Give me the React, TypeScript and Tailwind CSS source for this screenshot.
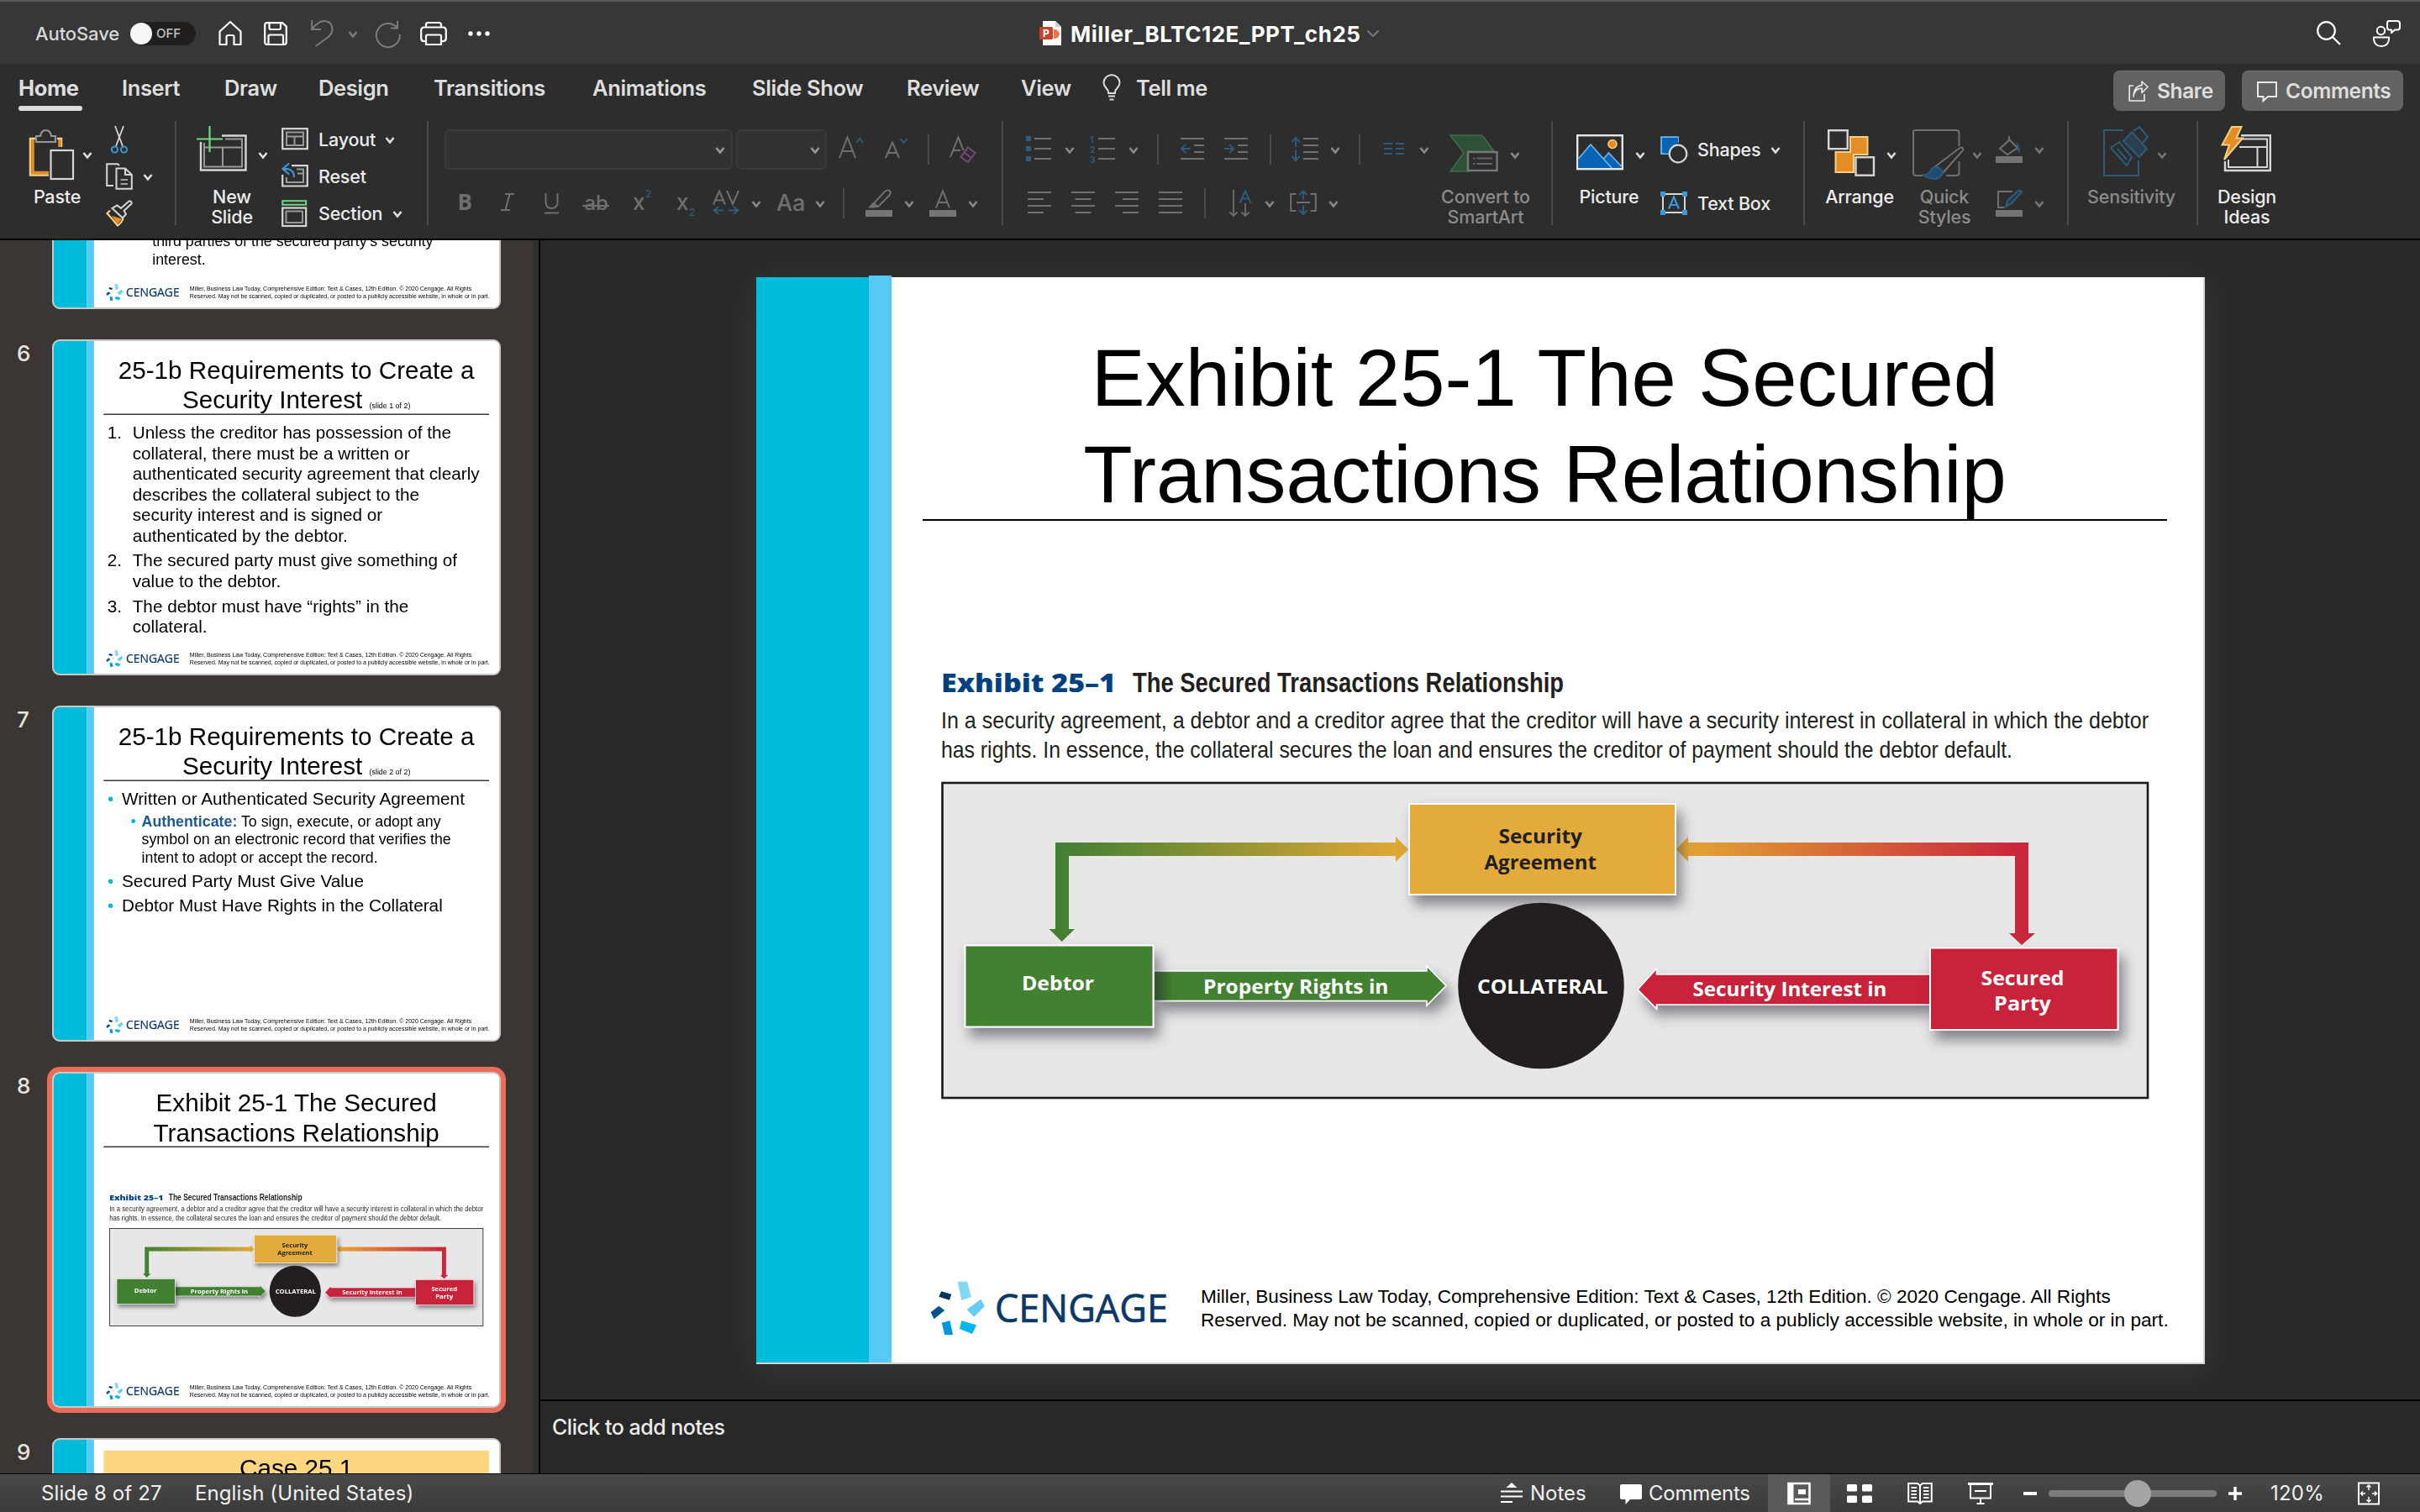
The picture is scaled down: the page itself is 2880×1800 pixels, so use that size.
import React from "react";
import clsx from "clsx";

const GREY = "#6f6f6f";
const BLUE = "#2f5b7a";
const LIGHT = "#d6d6d6";

type IcoProps = {
  w: number;
  h?: number;
  className?: string;
  children?: React.ReactNode;
};

const Ico = ({ w, h = 32, className, children }: IcoProps) => (
  <svg
    width={w}
    height={h}
    viewBox={`0 0 ${w} ${h}`}
    fill="none"
    strokeWidth={2}
    className={clsx("shrink-0 overflow-visible", className)}
  >
    {children}
  </svg>
);

const Chev = ({ className, c = "#8a8a8a" }: { className?: string; c?: string }) => (
  <Ico w={12} className={className}>
    <path d="M1.5 14 L6 19.5 L10.5 14" stroke={c} strokeWidth={2.6} />
  </Ico>
);

const Divider = () => <div className="h-[124px] w-[2px] shrink-0 bg-[#4b4b4b]" />;

const Sep = ({ className }: { className?: string }) => (
  <div className={clsx("h-9 w-[2px] shrink-0 bg-[#4b4b4b]", className)} />
);

const Glyph = ({
  x,
  y,
  size,
  c = GREY,
  children,
  ...rest
}: React.SVGProps<SVGTextElement> & { size: number; c?: string }) => (
  <text x={x} y={y} fontSize={size} fill={c} fontFamily="Inter, sans-serif" {...rest}>
    {children}
  </text>
);

/* ---------- slide content ---------- */

const CengageLogo = () => (
  <svg width={284} height={68} viewBox="1107 1524 284 68" className="mt-1 ml-[46px] shrink-0">
    <path d="M1139.7 1525.7 L1151.2 1525.7 L1155.8 1544 L1144.3 1548 Z" fill="#84d7f7" />
    <path d="M1167.3 1546.7 L1171.8 1555 L1159.2 1567.7 L1150.6 1559 Z" fill="#63cdf3" />
    <path d="M1144.3 1572.3 L1162 1577.3 L1157 1588 L1142 1582 Z" fill="#00b6f1" />
    <path d="M1120.8 1574.7 L1130.5 1572.3 L1134 1589 L1124.2 1589 Z" fill="#0099dd" />
    <path d="M1117.3 1554.7 L1124.2 1560 L1111.6 1570.3 L1107.6 1562.3 Z" fill="#00558a" />
    <path d="M1120.2 1537.3 L1132.2 1540.7 L1130 1547.7 L1117.3 1543.7 Z" fill="#053560" />
    <text
      x={1184}
      y={1574}
      fontSize={45}
      fill="#0b3866"
      stroke="#0b3866"
      strokeWidth={0.7}
      fontFamily="'Open Sans', sans-serif"
      textLength={206}
      lengthAdjust="spacingAndGlyphs"
    >
      CENGAGE
    </text>
  </svg>
);

type SlideProps = {
  heading?: React.ReactNode;
  headingClass?: string;
  className?: string;
  children?: React.ReactNode;
};

const Slide = ({ heading, headingClass, className, children }: SlideProps) => (
  <div
    className={clsx(
      "flex h-[1294px] w-[1724px] shrink-0 bg-white font-['Liberation_Sans',Arial,sans-serif] text-black",
      className
    )}
  >
    <div className="w-[134px] shrink-0 bg-[#00bcdc]" />
    <div className="-mt-[2px] w-[27px] shrink-0 bg-[#56c9f5]" />
    <div className="flex flex-1 flex-col">
      <div
        className={clsx(
          "ml-[37px] w-[1481px] shrink-0 text-center text-[95.8px] whitespace-nowrap",
          headingClass
        )}
      >
        {heading}
      </div>
      <div className="h-[900px] shrink-0">{children}</div>
      <div className="flex">
        <CengageLogo />
        <p className="mt-[10.4px] ml-[38px] text-[22.6px] leading-7 whitespace-nowrap">
          Miller, Business Law Today, Comprehensive Edition: Text &amp; Cases, 12th Edition. © 2020 Cengage. All Rights
          <br />
          Reserved. May not be scanned, copied or duplicated, or posted to a publicly accessible website, in whole or in part.
        </p>
      </div>
    </div>
  </div>
);

const RULED = "h-[290px] border-b-2 border-black";
const RULED_THUMB = "h-[290px] border-b-4 border-[#111]";

type FitProps = {
  x: number;
  x2: number;
  y: number;
  size: number;
  fill?: string;
  weight?: number;
  font?: string;
  children: string;
};

// text squeezed or stretched to run exactly from x to x2
const Fit = ({ x, x2, y, size, fill = "#fff", weight = 700, font = "'Open Sans', sans-serif", children }: FitProps) => (
  <text
    x={x}
    y={y}
    fontSize={size}
    fill={fill}
    fontWeight={weight}
    fontFamily={font}
    textLength={x2 - x}
    lengthAdjust="spacingAndGlyphs"
  >
    {children}
  </text>
);

const ARIAL = "'Liberation Sans', Arial, sans-serif";

const ExhibitFigure = () => (
  <svg width={1484} height={540} viewBox="1098 780 1484 540" className="ml-[37px]">
    <defs>
      <linearGradient id="toGold" x1="1264" x2="1661" y1="0" y2="0" gradientUnits="userSpaceOnUse">
        <stop offset="0" stopColor="#438033" />
        <stop offset="1" stopColor="#dfa834" />
      </linearGradient>
      <linearGradient id="toRed" x1="2009" x2="2400" y1="0" y2="0" gradientUnits="userSpaceOnUse">
        <stop offset="0" stopColor="#e2a433" />
        <stop offset="1" stopColor="#c9273c" />
      </linearGradient>
      <linearGradient id="stem" x1="1373" x2="1396" y1="0" y2="0" gradientUnits="userSpaceOnUse">
        <stop offset="0" stopColor="#2c5a20" />
        <stop offset="1" stopColor="#438033" />
      </linearGradient>
      <filter id="drop" x="-20%" y="-60%" width="140%" height="240%">
        <feDropShadow dx="6" dy="11" stdDeviation="8" floodColor="#40424c" floodOpacity="0.6" />
      </filter>
    </defs>
    <Fit x={1120} x2={1328} y={824} size={30.5} weight={800} fill="#004280">Exhibit 25–1</Fit>
    <Fit x={1348} x2={1861} y={824} size={33} fill="#231f20" font={ARIAL}>The Secured Transactions Relationship</Fit>
    <Fit x={1120} x2={2557} y={867} size={28.5} weight={400} fill="#231f20" font={ARIAL}>
      In a security agreement, a debtor and a creditor agree that the creditor will have a security interest in collateral in which the debtor
    </Fit>
    <Fit x={1120} x2={2395} y={902} size={28.5} weight={400} fill="#231f20" font={ARIAL}>
      has rights. In essence, the collateral secures the loan and ensures the creditor of payment should the debtor default.
    </Fit>
    <rect x="1121.5" y="932" width="1434.5" height="375" fill="#e7e7e7" stroke="#1b191a" strokeWidth="2.6" />

    <path d="M1256 1003 H1661 V996 L1676 1011 L1661 1026 V1019 H1272 V1106 H1279 L1263.7 1121 L1248.5 1106 H1256 Z" fill="url(#toGold)" />
    <path d="M2414 1003 H2009 V996 L1995 1011 L2009 1026 V1019 H2398 V1111 H2391 L2406 1125 L2422 1111 H2414 Z" fill="url(#toRed)" />

    <path filter="url(#drop)" d="M1373 1156 H1698 V1150 L1721 1173.5 L1698 1197 V1191.5 H1373 Z" fill="url(#stem)" stroke="#fff" strokeWidth="1.6" />
    <path filter="url(#drop)" d="M2298 1160 H1971.5 V1153 L1949 1178 L1971.5 1201 V1196 H2298 Z" fill="#c9223a" stroke="#fff" strokeWidth="1.6" />
    <g filter="url(#drop)" stroke="#fff" strokeWidth="2">
      <rect x="1677" y="957" width="317" height="108" fill="#e2ab3b" />
    </g>
    <g filter="url(#drop)" stroke="#fff" strokeWidth="2">
      <rect x="1148.5" y="1125.5" width="224" height="97" fill="#438033" />
    </g>
    <g filter="url(#drop)" stroke="#fff" strokeWidth="2">
      <rect x="2297" y="1128.5" width="223.5" height="97.5" fill="#c9223a" />
    </g>
    <circle cx="1834" cy="1173.5" r="98.8" fill="#231f20" />

    <Fit x={1783.5} x2={1883} y={1003.5} size={24} fill="#231f20">Security</Fit>
    <Fit x={1766.5} x2={1900} y={1035} size={24} fill="#231f20">Agreement</Fit>
    <Fit x={1216} x2={1302} y={1179} size={24}>Debtor</Fit>
    <Fit x={1432} x2={1652.5} y={1182.5} size={24}>Property Rights in</Fit>
    <Fit x={1758} x2={1913.5} y={1182.5} size={24}>COLLATERAL</Fit>
    <Fit x={2014.5} x2={2245.5} y={1185.5} size={24}>Security Interest in</Fit>
    <Fit x={2357.5} x2={2456.5} y={1173} size={24}>Secured</Fit>
    <Fit x={2373} x2={2441} y={1203} size={24}>Party</Fit>
  </svg>
);

const ExhibitSlide = ({ className, rule }: { className?: string; rule: string }) => (
  <Slide
    className={className}
    headingClass={clsx(rule, "pt-[61.5px] leading-[115.5px]")}
    heading={
      <>
        Exhibit 25-1 The Secured
        <br />
        Transactions Relationship
      </>
    }
  >
    <div className="pt-[160px]">
      <ExhibitFigure />
    </div>
  </Slide>
);

const RequirementsHeading = ({ part }: { part: string }) => (
  <>
    25-1b Requirements to Create a
    <br />
    Security Interest <span className="text-[28.7px] leading-none">{part}</span>
  </>
);

const ListItem = ({ n, className, children }: { n: string; className?: string; children: React.ReactNode }) => (
  <li className={clsx("flex", className)}>
    <span className="w-[97px] shrink-0">{n}</span>
    <span>{children}</span>
  </li>
);

const Bullet = ({ className, children }: { className?: string; children: React.ReactNode }) => (
  <li className={clsx("flex", className)}>
    <span className="w-[55px] shrink-0 text-[#00b8d8]">•</span>
    <span>{children}</span>
  </li>
);

const slides = [
  {
    id: 5,
    body: (
      <Slide headingClass={RULED_THUMB}>
        <p className="pt-[705px] pl-[224px] text-[57.5px] leading-[70px] whitespace-nowrap">
          third parties of the secured party’s security
          <br />
          interest.
        </p>
      </Slide>
    ),
  },
  {
    id: 6,
    body: (
      <Slide
        headingClass={clsx(RULED_THUMB, "pt-[63px] leading-[112px]")}
        heading={<RequirementsHeading part="(slide 1 of 2)" />}
      >
        <ol className="pt-7 pl-[51px] text-[67px] leading-[79.5px] whitespace-nowrap">
          <ListItem n="1.">
            Unless the creditor has possession of the
            <br />
            collateral, there must be a written or
            <br />
            authenticated security agreement that clearly
            <br />
            describes the collateral subject to the
            <br />
            security interest and is signed or
            <br />
            authenticated by the debtor.
          </ListItem>
          <ListItem n="2." className="mt-[14px]">
            The secured party must give something of
            <br />
            value to the debtor.
          </ListItem>
          <ListItem n="3." className="mt-[17px]">
            The debtor must have “rights” in the
            <br />
            collateral.
          </ListItem>
        </ol>
      </Slide>
    ),
  },
  {
    id: 7,
    body: (
      <Slide
        headingClass={clsx(RULED_THUMB, "pt-[63px] leading-[112px]")}
        heading={<RequirementsHeading part="(slide 2 of 2)" />}
      >
        <ul className="pt-7 pl-[52px] text-[67px] leading-[79.5px] whitespace-nowrap">
          <Bullet>Written or Authenticated Security Agreement</Bullet>
          <li className="mt-[12px] flex pl-[89px] text-[57.5px] leading-[69.8px]">
            <span className="w-[42px] shrink-0 text-[#00b8d8]">•</span>
            <span>
              <b className="text-[#1d5a96]">Authenticate:</b> To sign, execute, or adopt any
              <br />
              symbol on an electronic record that verifies the
              <br />
              intent to adopt or accept the record.
            </span>
          </li>
          <Bullet className="mt-4">Secured Party Must Give Value</Bullet>
          <Bullet className="mt-[13px]">Debtor Must Have Rights in the Collateral</Bullet>
        </ul>
      </Slide>
    ),
  },
  { id: 8, body: <ExhibitSlide rule={RULED_THUMB} />, selected: true },
  {
    id: 9,
    body: <Slide headingClass="mt-12 h-[242px] bg-[#fcd680] pt-[10px] leading-[115.5px]" heading="Case 25.1" />,
  },
];

const ThumbnailPanel = () => (
  <aside className="w-[643px] shrink-0 overflow-hidden border-r-2 border-black bg-[#303030]">
    <div className="h-full w-[634px] overflow-hidden bg-[#3b3633]">
      <ul className="-mt-[318px]">
        {slides.map(({ id, body, selected }) => (
          <li key={id} className="flex h-[436px]">
            <span className="w-[62px] shrink-0 pl-5 text-[26px] leading-[34px] font-medium text-[#e4e4e4]">{id}</span>
            <div
              className={clsx(
                "h-[400px] w-[534px] overflow-hidden rounded-[9px] border-2 border-[#c9c9c9] bg-white",
                selected && "ring-[6px] ring-[#e96c58]"
              )}
            >
              <div className="-m-[2px] h-[400px] w-[534px] origin-top-left scale-[0.3097]">{body}</div>
            </div>
          </li>
        ))}
      </ul>
    </div>
  </aside>
);

/* ---------- title bar and tabs ---------- */

const TitleBar = () => (
  <header className="flex h-[76px] items-center border-t-2 border-[#5a5a5a] bg-[#373737] pt-[2px]">
    <span className="ml-[42px] w-[113px] text-[22px] font-medium tracking-[-0.1px] text-[#d8d8d8]">AutoSave</span>
    <div className="flex h-7 w-[78px] items-center rounded-full bg-[#1f1f1f]">
      <div className="h-[26px] w-[26px] rounded-full bg-[#f6f6f6]" />
      <span className="ml-[5px] text-[15px] font-medium text-[#c4c4c4]">OFF</span>
    </div>
    <Ico w={28} className="ml-[27px]">
      <path
        d="M1.5 13.5 L14 2 L26.5 13.5 V29 H18.5 V20 Q18.5 18 16.5 18 H11.5 Q9.5 18 9.5 20 V29 H1.5 Z"
        stroke="#fff"
        strokeWidth={2.2}
        strokeLinejoin="round"
      />
    </Ico>
    <Ico w={28} className="ml-[26px]">
      <path
        d="M3.5 3.2 H22 L26.8 7.5 V26 Q26.8 29 24 29 H4 Q1.2 29 1.2 26 V5.5 Q1.2 3.2 3.5 3.2 Z M6.5 3.5 V9 Q6.5 11 8.5 11 H18 Q20 11 20 9 V3.5 M5.5 29 V19 Q5.5 17.5 7 17.5 H21.5 Q23 17.5 23 19 V29"
        stroke="#fff"
        strokeWidth={2.2}
      />
    </Ico>
    <Ico w={27} className="ml-[28px]">
      <path d="M1.2 0 V11 H12 M1.5 10.5 Q9 1 16 1 Q25.5 1.5 25.5 11 Q25.5 16 20 20.5 L5.5 31" stroke="#7b7b7b" />
    </Ico>
    <Chev className="ml-[17px]" c="#7b7b7b" />
    <Ico w={30} className="ml-[21px]">
      <path d="M26 1 V9.5 H18 M25.5 9 A14 14 0 1 0 28.8 17" stroke="#7b7b7b" />
    </Ico>
    <Ico w={32} className="ml-[23px]">
      <path
        d="M7 9 V5.5 Q7 3 9.5 3 H22.5 Q25 3 25 5.5 V9 M6 25 H4.5 Q1.2 25 1.2 21.5 V12.5 Q1.2 8.5 5 8.5 H27 Q30.8 8.5 30.8 12.5 V21.5 Q30.8 25 27.5 25 H26 M8.5 17.5 H23.5 Q25 17.5 25 19 V29 H7 V19 Q7 17.5 8.5 17.5 Z"
        stroke="#fff"
        strokeWidth={2.2}
      />
    </Ico>
    <Ico w={28} className="ml-[24px]">
      <circle cx="4" cy="16" r="2.7" fill="#fff" />
      <circle cx="14" cy="16" r="2.7" fill="#fff" />
      <circle cx="24" cy="16" r="2.7" fill="#fff" />
    </Ico>
    <Ico w={27} className="ml-[653px]">
      <path d="M4 1 H19 L26 8 V30 H4 Z" fill="#fdfdfd" />
      <path d="M19 1 L26 8 H19 Z" fill="#cfcfcf" />
      <path d="M17 11 A6.5 6.5 0 0 1 24 16.5 A6.5 6.5 0 0 1 17 22 Z" fill="#f0714f" />
      <rect x="0" y="8" width="16" height="15" rx="1.5" fill="#c9432a" />
      <Glyph x={4} y={20} size={12} c="#fff" fontWeight={700}>
        P
      </Glyph>
    </Ico>
    <span className="ml-[10px] w-[352px] text-[26px] font-bold tracking-[0.54px] whitespace-nowrap text-white">
      Miller_BLTC12E_PPT_ch25
    </span>
    <Ico w={16}>
      <path d="M1.5 12.5 L8 19 L14.5 12.5" stroke="#777" strokeWidth={2.2} />
    </Ico>
    <Ico w={30} className="ml-[1115px]">
      <circle cx="11.5" cy="12.5" r="10.3" stroke="#fff" strokeWidth={2.2} />
      <path d="M19 20 L28 29" stroke="#fff" strokeWidth={2.2} />
    </Ico>
    <Ico w={33} className="ml-[37px]">
      <circle cx="9.5" cy="12.5" r="4.7" stroke="#fff" />
      <path d="M1 20.5 H19 V23 Q18 31 10 31 Q2 31 1 23 Z" stroke="#fff" strokeLinejoin="round" />
      <path
        d="M19 1 H29 Q32 1 32 4 V8.5 Q32 11.5 29 11.5 H26 L22 15 V11.5 H19.5 Q17 11.5 17 8.5 V3.5 Q17 1 19 1 Z"
        stroke="#fff"
        strokeLinejoin="round"
      />
    </Ico>
  </header>
);

const tabs = [
  { label: "Insert", cell: "w-[122px]" },
  { label: "Draw", cell: "w-[112px]" },
  { label: "Design", cell: "w-[137px]" },
  { label: "Transitions", cell: "w-[189px]" },
  { label: "Animations", cell: "w-[190px]" },
  { label: "Slide Show", cell: "w-[184px]" },
  { label: "Review", cell: "w-[136px]" },
  { label: "View", cell: "w-[97px]" },
];

const TabBar = () => (
  <nav className="flex h-[60px] text-[25.5px] leading-[57px] font-semibold tracking-[-0.38px] whitespace-nowrap text-[#dedede]">
    <div className="ml-[22px] h-[56px] w-[76px]">
      <div className="h-[50px] font-bold">Home</div>
      <div className="h-[6px] rounded-full bg-[#dcdcdc]" />
    </div>
    <div className="w-[47px] shrink-0" />
    {tabs.map((t) => (
      <div key={t.label} className={clsx("shrink-0", t.cell)}>
        {t.label}
      </div>
    ))}
    <Ico w={22} className="mt-[13px]">
      <path
        d="M7 22 V20.5 Q7 18.5 4.5 16 Q1.5 13 1.5 9.5 A9.3 9 0 0 1 20.5 9.5 Q20.5 13 17.5 16 Q15 18.5 15 20.5 V22 Z M7 25.5 H15 M8.5 29.5 H13.5"
        stroke="#dcdcdc"
      />
    </Ico>
    <div className="ml-[18px]">Tell me</div>
    <div className="mt-2 ml-auto flex h-12 w-[133px] items-center rounded-lg border-t border-[#757575] bg-[#626262] text-[24.5px] leading-none">
      <Ico w={24} className="ml-[18px]">
        <path
          d="M6 9 H1.2 V27 H19 V19 M6 22 Q7 12.5 16 12 V17.5 L23 10.5 L16 4 V8.5 Q6.5 9.5 6 22 Z"
          stroke="#e8e8e8"
          strokeWidth={1.7}
          strokeLinejoin="round"
        />
      </Ico>
      <span className="ml-[10px]">Share</span>
    </div>
    <div className="mt-2 mr-5 ml-5 flex h-12 w-[192px] items-center rounded-lg border-t border-[#757575] bg-[#626262] text-[24.5px] leading-none">
      <Ico w={24} className="ml-[18px]">
        <path d="M1 5 H23 V22 H13 L7.5 27 V22 H1 Z" stroke="#e8e8e8" />
      </Ico>
      <span className="ml-[10px]">Comments</span>
    </div>
  </nav>
);

/* ---------- ribbon ---------- */

const BigButton = ({
  label,
  className,
  row,
  dim,
  children,
}: {
  label: React.ReactNode;
  className?: string;
  row?: string;
  dim?: boolean;
  children: React.ReactNode;
}) => (
  <div className={clsx("flex shrink-0 flex-col pt-[6px]", className)}>
    <div className={clsx("flex h-16 items-center", row)}>{children}</div>
    <div className={clsx("mt-2 text-center leading-6", dim && "text-[#8b8b8b]")}>{label}</div>
  </div>
);

const BigChev = ({ className, c = "#e0e0e0" }: { className?: string; c?: string }) => (
  <Chev className={clsx("mt-[3px]", className)} c={c} />
);

const ClipboardGroup = () => (
  <div className="flex h-[132px] w-[208px] shrink-0">
    <BigButton label="Paste" className="ml-[22px] w-[92px]" row="pl-[12px]">
      <Ico w={54} h={64}>
        <path d="M8 15 H2 V58.5 H24 M34 15 H39 V25" stroke="#f5cf85" strokeWidth={2.5} />
        <path d="M5 16 V55.5 H24 M37 16 V25" stroke="#e58e26" strokeWidth={3.6} />
        <path d="M9 19 V12 H14 Q15 5 20.5 5 Q26 5 27 12 H32 V19 Z" stroke="#969696" strokeWidth={2.2} />
        <rect x="26.5" y="29" width="26.5" height="34" stroke={LIGHT} strokeWidth={2.2} />
      </Ico>
    </BigButton>
    <BigChev className="mt-[24px] -ml-[16px]" />
    <div className="ml-4 flex flex-col">
      <div className="flex h-11 items-center">
        <Ico w={20} className="ml-[6px]">
          <path d="M5 0 L14 24 M15 0 L6 24" stroke={LIGHT} strokeWidth={1.8} />
          <circle cx="4.5" cy="28" r="3.6" stroke="#3b97d9" />
          <circle cx="15.5" cy="28" r="3.6" stroke="#3b97d9" />
        </Ico>
      </div>
      <div className="flex h-11 items-center">
        <Ico w={32}>
          <path d="M9 27 H1.2 V1.2 H14 L16 3" stroke={LIGHT} />
          <path d="M12.5 6.5 H23 L30.8 14 V30.8 H12.5 Z M23 7 V14 H30" stroke={LIGHT} />
          <path d="M17.5 20 H26 M17.5 25 H26" stroke="#a0a0a0" />
        </Ico>
        <Chev className="ml-3" c="#e0e0e0" />
      </div>
      <div className="flex h-11 items-center">
        <Ico w={32}>
          <path d="M5 12.5 L1.5 16 Q8 23 14 30.5 Q19 27 20.5 22" stroke="#f5cf85" strokeWidth={2.2} />
          <path d="M7 19 L14 29 L19 22.5 Z" fill="#e58e26" />
          <path d="M7.5 10 L20 21.5 L24 17 L21.5 13 L30.5 4.5 Q31 1 27.5 1.5 L18 10 L13.5 6.5 Z" stroke={LIGHT} />
        </Ico>
      </div>
    </div>
  </div>
);

const SlidesGroup = () => (
  <div className="flex h-[132px] w-[298px] shrink-0">
    <BigButton label={<>New<br />Slide</>} className="ml-[20px] w-[92px]" row="pl-[4px]">
      <Ico w={60} h={64}>
        <path d="M30 11.5 H58.5 V52.5 H5 V19" stroke={LIGHT} strokeWidth={2.4} />
        <path d="M34 15.5 H54 V48.5 H9 V20 M9 25.5 H54 M31 25.5 V48.5" stroke="#999" />
        <path d="M0 15.5 H31 M15.5 0 V31" stroke="#6fd883" strokeWidth={2.2} />
      </Ico>
    </BigButton>
    <BigChev className="mt-[24px] -ml-[15px]" />
    <div className="ml-4 flex flex-col">
      <div className="flex h-11 items-center">
        <Ico w={32}>
          <rect x="1.2" y="3.2" width="29.6" height="24" stroke={LIGHT} strokeWidth={2.2} />
          <path d="M6 7.5 H26 V23 H6 Z M6 12.5 H26 M15.5 12.5 V23" stroke="#999" />
        </Ico>
        <span className="ml-[12px] w-[79px]">Layout</span>
        <Chev c="#e0e0e0" />
      </div>
      <div className="flex h-11 items-center">
        <Ico w={32}>
          <path d="M12 3.2 H30.8 V27.5 H1.2 V14" stroke={LIGHT} strokeWidth={2.2} />
          <path d="M18 7.5 H26 V23 H6 V17 M19 12.5 H26" stroke="#999" />
          <path d="M9 0.5 L1.5 7 L9 13.5 M2 7 Q15 6 15 17" stroke="#3b97d9" strokeWidth={2.2} />
        </Ico>
        <span className="ml-[12px]">Reset</span>
      </div>
      <div className="flex h-11 items-center">
        <Ico w={32}>
          <rect x="1.2" y="1.2" width="28" height="4.5" stroke="#6fd883" />
          <rect x="1.2" y="9.5" width="28" height="21.5" stroke={LIGHT} strokeWidth={2.2} />
          <rect x="5.5" y="13.5" width="19.5" height="13.5" stroke="#999" />
        </Ico>
        <span className="ml-[12px] w-[88px]">Section</span>
        <Chev c="#e0e0e0" />
      </div>
    </div>
  </div>
);

const FontGroup = () => (
  <div className="h-[132px] w-[682px] shrink-0 pt-[2px]">
    <div className="flex h-16 items-center">
      <div className="ml-[19px] flex h-12 w-[343px] items-center rounded-md border-2 border-[#3a3a3a] bg-[#323232]">
        <Chev className="ml-[320px]" c="#9a9a9a" />
      </div>
      <div className="ml-1 flex h-12 w-[108px] items-center rounded-md border-2 border-[#3a3a3a] bg-[#323232]">
        <Chev className="ml-[86px]" c="#9a9a9a" />
      </div>
      <Ico w={30} className="ml-[14px]">
        <path d="M1 26 L10.5 1.5 L20 26 M4.5 18 H16.5" stroke={GREY} />
        <path d="M21 8 L25 3 L29 8" stroke={BLUE} />
      </Ico>
      <Ico w={28} className="ml-[25px]">
        <path d="M1 26 L9 7.5 L17 26 M4 20 H14" stroke={GREY} />
        <path d="M18.5 3 L22.5 8 L26.5 3" stroke={BLUE} />
      </Ico>
      <Sep className="ml-[23px]" />
      <Ico w={32} className="ml-[24px]">
        <path d="M1 25 L10.5 1.5 L16.5 17 M4.5 17 H13" stroke={GREY} />
        <path d="M22 13.5 L30.5 20 L22 31 L13.5 25 Z M17.5 19.5 L26 26" stroke="#7a4a7c" />
      </Ico>
    </div>
    <div className="flex h-16 items-center">
      <Ico w={32} className="ml-[26px]">
        <Glyph x={8.5} y={24} size={26} fontWeight={700} fontFamily="'Open Sans', sans-serif">
          B
        </Glyph>
      </Ico>
      <Ico w={32} className="ml-[20px]">
        <path d="M13 5 H24 M8 24 H19 M18.5 5 L13.5 24" stroke={GREY} />
      </Ico>
      <Ico w={32} className="ml-[20px]">
        <path d="M9.500 4 V14 Q9.500 22 16.500 22 Q23.500 22 23.500 14 V4 M8 27.500 H25" stroke={GREY} />
      </Ico>
      <Ico w={32} className="ml-[21px]">
        <Glyph x={2.5} y={24} size={24}>
          ab
        </Glyph>
        <path d="M0 19 H32" stroke={GREY} />
      </Ico>
      <Ico w={24} className="ml-[28px]">
        <Glyph x={0} y={24} size={26} fontWeight={500}>
          x
        </Glyph>
        <Glyph x={15} y={9} size={12} c={BLUE} fontWeight={500}>
          2
        </Glyph>
      </Ico>
      <Ico w={24} className="ml-[28px]">
        <Glyph x={0} y={24} size={26} fontWeight={500}>
          x
        </Glyph>
        <Glyph x={15} y={31} size={12} c={BLUE} fontWeight={500}>
          2
        </Glyph>
      </Ico>
      <Ico w={32} className="ml-[19px]">
        <path d="M1 17.5 L8 1.5 L15 17.5 M3.5 12.5 H12.5 M17 1 L24 17 L31 1" stroke={GREY} />
        <path d="M13 24.5 H2 M7 20 L1.5 24.5 L7 29 M19 24.5 H30 M25 20 L30.5 24.5 L25 29" stroke={BLUE} />
      </Ico>
      <Chev className="ml-[14px]" />
      <Ico w={34} className="ml-[19px]">
        <Glyph x={-1} y={25} size={27}>
          Aa
        </Glyph>
      </Ico>
      <Chev className="ml-[11px]" />
      <Sep className="ml-[21px]" />
      <Ico w={32} className="ml-[25px]">
        <path d="M10 16 L23 2 Q27 -1 29.5 2 Q30.5 4 28 7 L15 20 Z" stroke={GREY} />
        <path d="M9 15 L15.5 20.5 L10 21.5 H3 Z" fill={GREY} />
        <rect x="0" y="24" width="32" height="8" fill="#757575" />
      </Ico>
      <Chev className="ml-[14px]" />
      <Ico w={32} className="ml-[18px]">
        <path d="M8 21.5 L16 1.5 L24 21.5 M11 15 H21" stroke={GREY} />
        <rect x="0" y="24" width="32" height="8" fill="#757575" />
      </Ico>
      <Chev className="ml-[14px]" />
    </div>
  </div>
);

const ParagraphGroup = () => (
  <div className="flex h-[132px] w-[652px] shrink-0">
    <div className="w-[507px] pt-[2px]">
      <div className="flex h-16 items-center">
        <Ico w={30} className="ml-[27px]">
          <path d="M0 3 H6 M0 15 H6 M0 27 H6" stroke={BLUE} strokeWidth={6} />
          <path d="M10 3 H30 M10 15 H30 M10 27 H30" stroke={GREY} />
        </Ico>
        <Chev className="ml-[16px]" />
        <Ico w={30} className="ml-[18px]">
          <Glyph x={0} y={8} size={10.5} c={BLUE} fontWeight={700}>1</Glyph>
          <Glyph x={0} y={20} size={10.5} c={BLUE} fontWeight={700}>2</Glyph>
          <Glyph x={0} y={32} size={10.5} c={BLUE} fontWeight={700}>3</Glyph>
          <path d="M10 3 H30 M10 15 H30 M10 27 H30" stroke={GREY} />
        </Ico>
        <Chev className="ml-[16px]" />
        <Sep className="ml-[22px]" />
        <Ico w={28} className="ml-[26px]">
          <path d="M0 3 H28 M16 11 H28 M16 19 H28 M0 27 H28" stroke={GREY} />
          <path d="M12 15 H1.5 M6 10 L1 15 L6 20" stroke={BLUE} />
        </Ico>
        <Ico w={28} className="ml-[24px]">
          <path d="M0 3 H28 M16 11 H28 M16 19 H28 M0 27 H28" stroke={GREY} />
          <path d="M0 15 H10.5 M6 10 L11 15 L6 20" stroke={BLUE} />
        </Ico>
        <Sep className="ml-[26px]" />
        <Ico w={32} className="ml-[24px]">
          <path d="M14 3 H32 M14 11 H32 M14 19 H32 M14 27 H32" stroke={GREY} />
          <path d="M5 2 V13 M0.5 7 L5 2 L9.5 7 M5 17 V29 M0.5 24 L5 29 L9.5 24" stroke={BLUE} />
        </Ico>
        <Chev className="ml-[14px]" />
        <Sep className="ml-[22px]" />
        <Ico w={24} className="ml-[28px]">
          <path d="M0 9 H10 M14 9 H24 M0 15 H10 M14 15 H24 M0 21 H10 M14 21 H24" stroke={BLUE} />
        </Ico>
        <Chev className="ml-[18px]" />
      </div>
      <div className="flex h-16 items-center">
        <Ico w={28} className="ml-[29px]">
          <path d="M0 3 H28 M0 11 H19 M0 19 H28 M0 27 H19" stroke={GREY} />
        </Ico>
        <Ico w={28} className="ml-[24px]">
          <path d="M0 3 H28 M4.5 11 H23.5 M0 19 H28 M4.5 27 H23.5" stroke={GREY} />
        </Ico>
        <Ico w={28} className="ml-[24px]">
          <path d="M0 3 H28 M9 11 H28 M0 19 H28 M9 27 H28" stroke={GREY} />
        </Ico>
        <Ico w={28} className="ml-[24px]">
          <path d="M0 3 H28 M0 11 H28 M0 19 H28 M0 27 H28" stroke={GREY} />
        </Ico>
        <Sep className="ml-[26px]" />
        <Ico w={27} className="ml-[28px]">
          <path
            d="M5 0 V31 M0.5 26.5 L5 31 L9.5 26.5 M19 16 V31 M14.5 26.5 L19 31 L23.5 26.5"
            stroke={GREY}
            strokeWidth={1.8}
          />
          <path d="M12.5 15.5 L19 1.5 L25.5 15.5 M15 10.5 H23" stroke={BLUE} />
        </Ico>
        <Chev className="ml-[15px]" />
        <Ico w={32} className="ml-[18px]">
          <path d="M7.5 5 H1.2 V25 H7.5 M24.5 5 H30.8 V25 H24.5 M8 15 H24" stroke={GREY} />
          <path d="M16 1.5 V11.5 M11.5 6 L16 1.5 L20.5 6 M16 18.5 V29 M11.5 24.5 L16 29 L20.5 24.5" stroke={BLUE} />
        </Ico>
        <Chev className="ml-[14px]" />
      </div>
    </div>
    <BigButton label={<>Convert to<br />SmartArt</>} dim className="ml-[9px] w-[116px]" row="pl-[15px]">
      <Ico w={58} h={64}>
        <path d="M1 11 H39 L53 30 H22 V54 H1 L17 32 Z" fill="#2d5237" stroke="#41694b" strokeWidth={1.6} />
        <rect x="22" y="31" width="34.5" height="22" fill="#2d2d2d" stroke="#777" strokeWidth={2.4} />
        <path d="M28 38.5 H30.5 M28 45 H30.5 M32.5 38.5 H51 M32.5 45 H51" stroke="#666" />
      </Ico>
      <BigChev className="ml-[14px]" c="#8a8a8a" />
    </BigButton>
  </div>
);

const InsertGroup = () => (
  <div className="flex h-[132px] w-[298px] shrink-0">
    <BigButton label="Picture" className="ml-[12px] w-[110px]" row="pl-[16px]">
      <Ico w={56} h={64}>
        <rect x="1.2" y="11.2" width="53.6" height="40" stroke="#e6e6e6" strokeWidth={2.4} />
        <path d="M2.5 39 L17 22 L32 39 L38 32 L53.5 48 V50 H2.5 Z" fill="#0863b5" />
        <path d="M2.5 39 L17 22 L42 50 M32 39.5 L38.5 32 L53.5 48" stroke="#6bb8ee" strokeWidth={1.6} />
        <circle cx="43" cy="21.5" r="5" fill="#e58e26" stroke="#f5cf85" strokeWidth={1.6} />
      </Ico>
      <BigChev className="ml-[14px]" />
    </BigButton>
    <div className="ml-[6px] pt-[2px]">
      <div className="flex h-16 items-center">
        <Ico w={32}>
          <path d="M10 21 H1.2 V1.2 H21 V8" stroke="#6bb8ee" />
          <path d="M10 21 L21 8 V2 H2 V20 Z" fill="#0863b5" />
          <circle cx="21" cy="21" r="10.3" fill="#2d2d2d" stroke={LIGHT} strokeWidth={2.2} />
        </Ico>
        <span className="ml-[12px] w-[87px]">Shapes</span>
        <Chev c="#e0e0e0" />
      </div>
      <div className="flex h-16 items-center">
        <Ico w={32}>
          <rect x="3" y="5" width="26" height="22" stroke={LIGHT} />
          <path d="M10 22.5 L16 8.5 L22 22.5 M12 18 H20" stroke="#3b97d9" strokeWidth={2.2} />
          <path d="M0 2 H6 V8 H0 Z M26 2 H32 V8 H26 Z M0 24 H6 V30 H0 Z M26 24 H32 V30 H26 Z" fill="#3b97d9" />
        </Ico>
        <span className="ml-[12px]">Text Box</span>
      </div>
    </div>
  </div>
);

const ArrangeGroup = () => (
  <div className="flex h-[132px] w-[312px] shrink-0">
    <BigButton label="Arrange" className="ml-[10px] w-[110px]" row="pl-[17px]">
      <Ico w={56} h={64}>
        <path d="M27 13 H47.5 V34 H31 V55 H9.5 V31 H27 Z" fill="#e58e26" stroke="#f5cf85" />
        <rect x="1.2" y="5.2" width="22.5" height="22" fill="#2d2d2d" stroke={LIGHT} strokeWidth={2.4} />
        <rect x="33.5" y="37.2" width="21.5" height="21.5" fill="#2d2d2d" stroke={LIGHT} strokeWidth={2.4} />
      </Ico>
      <BigChev className="ml-[14px]" />
    </BigButton>
    <BigButton label={<>Quick<br />Styles</>} dim className="-ml-[9px] w-[110px]" row="pl-[17px]">
      <Ico w={62} h={64}>
        <path d="M12 59 H4 Q1 59 1 56 V7 Q1 5 4 5 H52 Q55.5 5 55.5 8 V24 M55.5 42 V56 Q55.5 59 52 59 H40" stroke={GREY} />
        <path d="M26 49 L55 27 Q61 23.5 60 29 L36 56" stroke={GREY} />
        <path
          d="M13 58.5 Q20 58 21.5 53 Q25 47 31 49.5 Q37 53 35.5 57 Q31 65 22 62.5 Q16 61 13 58.5 Z"
          fill="#1f4d70"
          stroke={BLUE}
        />
      </Ico>
      <BigChev className="ml-[9px]" c="#777" />
    </BigButton>
    <div className="ml-[6px] pt-[2px]">
      <div className="flex h-16 items-center">
        <Ico w={32}>
          <path d="M15 3 L26 14 L14 22 L5 15 L16 5 V0" stroke={GREY} />
          <path d="M24 7 Q30 12 28.5 20 Q25 18 26 14 Z" fill={BLUE} />
          <rect x="0" y="24" width="32" height="8" fill="#757575" />
        </Ico>
        <Chev className="ml-[14px]" c="#777" />
      </div>
      <div className="flex h-16 items-center">
        <Ico w={32}>
          <path d="M20 2 H3 V21 H10" stroke={GREY} />
          <path d="M12 20 L14 13 L26 1.5 Q29 -0.5 31 2.5 L18.5 16.5 Z" stroke={BLUE} fill="#263b4a" />
          <rect x="0" y="24" width="32" height="8" fill="#757575" />
        </Ico>
        <Chev className="ml-[14px]" c="#777" />
      </div>
    </div>
  </div>
);

const Ribbon = () => (
  <div className="flex h-[148px] pt-2 text-[21.5px] font-medium tracking-[-0.2px] whitespace-nowrap text-[#ececec]">
    <ClipboardGroup />
    <Divider />
    <SlidesGroup />
    <Divider />
    <FontGroup />
    <Divider />
    <ParagraphGroup />
    <Divider />
    <InsertGroup />
    <Divider />
    <ArrangeGroup />
    <Divider />
    <BigButton label="Sensitivity" dim className="ml-[14px] w-[121px]" row="pl-[27px]">
      <Ico w={54} h={64}>
        <path d="M24 5 H1 V59 H42 V41" stroke={BLUE} />
        <path d="M24 18 L34 7 L52 27 L43 37 Z" stroke={BLUE} fill="#2a4050" />
        <path d="M36 6 L43 1 L53 13 L47 20" stroke={BLUE} />
        <path d="M9 26 L19 19 L34 37 L28 47 Z M17 27 L28 40" stroke={BLUE} />
      </Ico>
      <BigChev className="ml-[10px]" c="#777" />
    </BigButton>
    <div className="w-[17px]" />
    <Divider />
    <BigButton label={<>Design<br />Ideas</>} className="ml-[15px] w-[86px]" row="pl-[12px]">
      <Ico w={60} h={64}>
        <path d="M24 11.2 H58.8 V53 H5 V42" stroke={LIGHT} strokeWidth={2.4} />
        <path d="M25 15.5 H55 V49 H9 V40 M22 25 H55 M43.5 25 V49" stroke={LIGHT} />
        <path d="M13 1 H24.5 L18.5 14.5 H26 L4 40 L10 22.5 H1.5 Z" fill="#e58e26" stroke="#f5cf85" />
      </Ico>
    </BigButton>
  </div>
);

/* ---------- status bar ---------- */

const StatusBar = () => (
  <footer className="flex h-[46px] items-center border-t border-black bg-linear-to-b from-[#494949] to-[#3b3b3b] text-[24px] whitespace-nowrap text-[#f0f0f0]">
    <span className="ml-[49px] w-[183px] tracking-[0.1px]">Slide 8 of 27</span>
    <span className="tracking-[0.1px]">English (United States)</span>
    <Ico w={26} className="ml-auto">
      <path d="M6.5 9 L13 3 L19.5 9 Z" fill="#fff" />
      <path d="M0 13.5 H26 M0 19.5 H26 M0 26 H14" stroke="#fff" strokeWidth={2.2} />
    </Ico>
    <span className="ml-[9px] w-[107px]">Notes</span>
    <Ico w={26}>
      <path d="M2 5 H24 Q26 5 26 7 V21 Q26 23 24 23 H12 L6.5 29 V23 H2 Q0 23 0 21 V7 Q0 5 2 5 Z" fill="#fff" />
    </Ico>
    <span className="ml-[8px] w-[142px] tracking-[-0.2px]">Comments</span>
    <div className="flex h-[46px] w-[74px] items-center bg-[#5a5a5a]">
      <Ico w={28} className="ml-[23px]">
        <path d="M1.5 4 H26.5 V28 H1.5 Z M9 23 H26" stroke="#fff" strokeWidth={2.6} />
        <path d="M1.5 4 H7.5 V28 H1.5 Z M13 11 H22 V17 H13 Z" fill="#fff" />
      </Ico>
    </div>
    <Ico w={30} className="ml-[20px]">
      <g fill="#fff">
        <rect x="0" y="5" width="12" height="8.5" rx="1.5" />
        <rect x="18" y="5" width="12" height="8.5" rx="1.5" />
        <rect x="0" y="18.5" width="12" height="8.5" rx="1.5" />
        <rect x="18" y="18.5" width="12" height="8.5" rx="1.5" />
      </g>
    </Ico>
    <Ico w={30} className="ml-[42px]">
      <path d="M15 28 L12 25.5 H1.2 V4 H12 L15 6.5 L18 4 H28.8 V25.5 H18 Z M15 6 V28" stroke="#fff" />
      <path
        d="M4.5 9 H11 M4.5 13 H11 M4.5 17 H11 M4.5 21 H11 M19 9 H25.5 M19 13 H25.5 M19 17 H25.5 M19 21 H25.5"
        stroke="#fff"
        strokeWidth={1.8}
      />
    </Ico>
    <Ico w={30} className="ml-[42px]">
      <path d="M0 4.5 H30" stroke="#fff" strokeWidth={3} />
      <path d="M3 5 V21.5 H27 V5 M8 13 H22 M15 22 V28 M10.5 28 H19.5" stroke="#fff" />
    </Ico>
    <div className="ml-[36px] h-1 w-4 bg-white" />
    <div className="ml-[14px] flex h-2 w-[200px] items-center rounded-full bg-[#7c7c7c]">
      <div className="ml-[90px] h-8 w-8 shrink-0 rounded-full bg-[#a4a4a4]" />
    </div>
    <Ico w={16} className="ml-[14px]">
      <path d="M0 16 H16 M8 8 V24" stroke="#fff" strokeWidth={3.4} />
    </Ico>
    <span className="ml-[34px] w-[104px] tracking-[0.2px]">120%</span>
    <Ico w={26} className="mr-12">
      <rect x="1" y="3.5" width="24" height="25" stroke="#fff" />
      <path
        d="M13 6 V12 M13 20 V26 M4 16 H9 M17 16 H22 M10.5 8.5 L13 6 L15.5 8.5 M10.5 23.5 L13 26 L15.5 23.5 M6 13.5 L3.5 16 L6 18.5 M20 13.5 L22.5 16 L20 18.5"
        stroke="#fff"
        strokeWidth={1.5}
      />
    </Ico>
  </footer>
);

const App = () => {
  return (
    <div className="flex h-[1800px] w-[2880px] flex-col overflow-hidden bg-[#282828] font-['Inter',sans-serif]">
      <TitleBar />
      <div className="border-b-2 border-black bg-[#2d2d2d]">
        <TabBar />
        <Ribbon />
      </div>
      <div className="flex min-h-0 flex-1">
        <ThumbnailPanel />
        <main className="flex flex-1 flex-col">
          <div className="h-[1380px] shrink-0 overflow-hidden pt-[44px] pl-[257px]">
            <div className="h-[1294px] w-[1724px] shadow-[0_8px_44px_6px_rgba(255,255,255,0.07)]">
              <ExhibitSlide rule={RULED} className="border-r-2 border-b-2 border-[#d4d4d4]" />
            </div>
          </div>
          <div className="flex-1 border-t-2 border-black pt-[16px] pl-[14px] text-[25px] leading-[31px] font-medium tracking-[-0.5px] text-[#ececec]">
            Click to add notes
          </div>
        </main>
      </div>
      <StatusBar />
    </div>
  );
};

export default App;
